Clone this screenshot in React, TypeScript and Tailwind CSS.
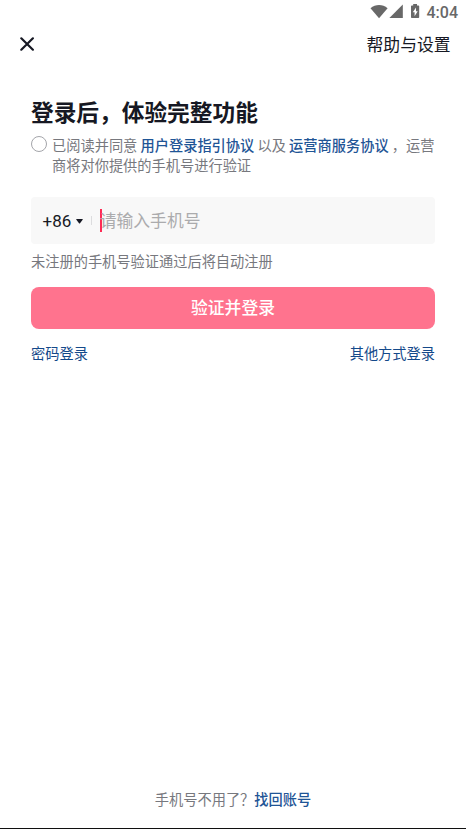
import React from "react";

function StatusBar() {
  return (
    <div className="flex h-6 items-center justify-end pr-[8px] text-[#686868]">
      <svg className="block h-6 w-[52px]" viewBox="0 0 52 24" fill="currentColor">
        <path d="M0.5 8.2C5.5 3.9 12.6 3.9 17.6 8.2L9.05 18.2Z" />
        <path d="M32.8 4.6V18H19.4Z" />
        <path
          fillRule="evenodd"
          d="M43.2 4h3.8v1.4h1.4q.8 0 .8.8v11q0 .8-.8.8h-6.6q-.8 0-.8-.8v-11q0-.8.8-.8h1.4ZM46 7.4L42.8 12.3H44.6V16.2L47.7 11.2H46Z"
        />
      </svg>
      <span className="ml-[5px] mt-px font-['Roboto'] text-[16px] font-medium leading-6">4:04</span>
    </div>
  );
}

function Link({ children, strong = false }: { children: React.ReactNode; strong?: boolean }) {
  return <a className={strong ? "font-medium text-[#1f5596]" : "text-[#14498a]"}>{children}</a>;
}

export default function App() {
  return (
    <div className="flex h-[829px] w-[466px] flex-col overflow-hidden border-b border-[#101010] bg-white font-['Noto_Sans_CJK_SC',sans-serif] text-[14.22px] text-[#77787e]">
      <StatusBar />
      <header className="flex h-[40px] items-center justify-between pl-5 pr-[15.5px] text-[#161823]">
        <svg className="block h-[14px] w-[14px]" viewBox="0 0 14 14" fill="none" stroke="currentColor" strokeWidth="2.2" strokeLinecap="round">
          <path d="M1.3 1.3L12.9 12.7M12.9 1.3L1.3 12.7" />
        </svg>
        <span className="text-[16.8px] leading-6">帮助与设置</span>
      </header>

      <main className="flex flex-1 flex-col px-[31px] pt-[32px]">
        <h1 className="text-[22.7px] font-bold leading-8 text-[#161823]">登录后，体验完整功能</h1>
        <div className="mt-[8px] flex">
          <span className="mr-[5px] h-4 w-4 shrink-0 rounded-full border border-[#a4a5aa]" />
          <p className="whitespace-nowrap leading-[19.5px]">
            已阅读并同意 <Link strong>用户登录指引协议</Link> 以及 <Link strong>运营商服务协议</Link> ，运营
            <br />
            商将对你提供的手机号进行验证
          </p>
        </div>

        <div className="mt-[22px] flex h-[47px] items-center rounded-[4px] bg-[#f8f8f8] pl-[11.5px]">
          <span className="mt-[2px] font-['Roboto'] text-[17px] text-[#161823]">+86</span>
          <svg className="ml-[5px] mt-px block h-[5px] w-[7px]" viewBox="0 0 7 5" fill="#161823">
            <path d="M.6 0h5.8q.7 0 .2.7L4 4.3q-.5.6-1 0L.4.7Q-.1 0 .6 0Z" />
          </svg>
          <span className="ml-[8px] h-[9px] w-px bg-[#dcdcde]" />
          <span className="ml-[8px] h-[23px] w-[2px] bg-[#fe2c55]" />
          <span className="-ml-[2.5px] text-[16.8px] text-[#ababad]">请输入手机号</span>
        </div>
        <p className="mt-[7px] leading-5">未注册的手机号验证通过后将自动注册</p>

        <button className="mt-[16px] h-[42px] rounded-[8px] bg-[#ff738e] text-[16.8px] font-medium text-white">
          验证并登录
        </button>
        <div className="mt-[14px] flex justify-between leading-5">
          <Link>密码登录</Link>
          <Link>其他方式登录</Link>
        </div>
      </main>

      <footer className="pb-[19px] text-center leading-5">
        手机号不用了？<Link strong>找回账号</Link>
      </footer>
    </div>
  );
}
